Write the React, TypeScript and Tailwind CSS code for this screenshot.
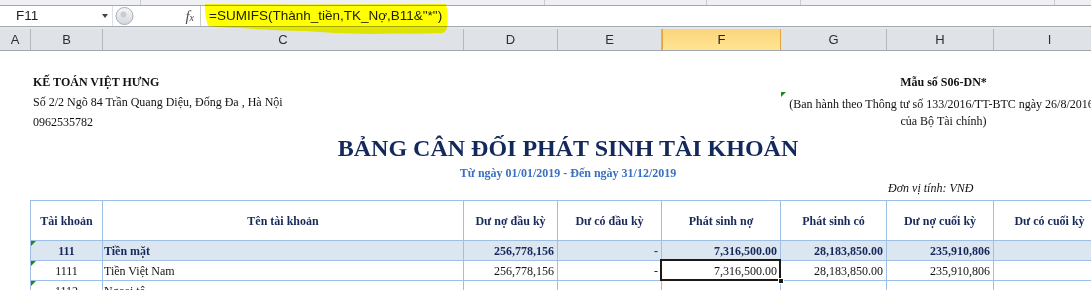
import React from 'react';

const headerCols = [
  { label: 'A', w: 'w-[31px]' },
  { label: 'B', w: 'w-[72px]' },
  { label: 'C', w: 'w-[361px]' },
  { label: 'D', w: 'w-[94px]' },
  { label: 'E', w: 'w-[104px]' },
  { label: 'F', w: 'w-[119px]', active: true },
  { label: 'G', w: 'w-[106px]' },
  { label: 'H', w: 'w-[107px]' },
  { label: 'I', w: 'w-[112px]' },
];

// widths of the table columns B..I
const tw = ['w-[72px]', 'w-[361px]', 'w-[94px]', 'w-[104px]', 'w-[119px]', 'w-[106px]', 'w-[107px]', 'w-[112px]'];

const heads = ['Tài khoản', 'Tên tài khoản', 'Dư nợ đầu kỳ', 'Dư có đầu kỳ', 'Phát sinh nợ', 'Phát sinh có', 'Dư nợ cuối kỳ', 'Dư có cuối kỳ'];

type Row = {
  code: string;
  name: string;
  vals: string[];
  bold?: boolean;
  selected?: boolean;
};

const rows: Row[] = [
  { code: '111', name: 'Tiền mặt', vals: ['256,778,156', '-', '7,316,500.00', '28,183,850.00', '235,910,806', ''], bold: true },
  { code: '1111', name: 'Tiền Việt Nam', vals: ['256,778,156', '-', '7,316,500.00', '28,183,850.00', '235,910,806', ''], selected: true },
  { code: '1112', name: 'Ngoại tệ', vals: ['', '', '', '', '', ''] },
];

function GreenMark() {
  return (
    <span className="absolute left-0 top-0 h-0 w-0 border-r-[5px] border-t-[5px] border-r-transparent border-t-[#1b8a1b]" />
  );
}

function FormulaBar() {
  return (
    <div className="relative">
      <div className="relative h-[5px] bg-[#eef0f3]">
        <span className="absolute left-[140px] top-0 h-[5px] w-px bg-[#c8ccd2]" />
        <span className="absolute left-[544px] top-0 h-[5px] w-px bg-[#c8ccd2]" />
        <span className="absolute left-[706px] top-0 h-[5px] w-px bg-[#c8ccd2]" />
        <span className="absolute left-[800px] top-0 h-[5px] w-px bg-[#c8ccd2]" />
        <span className="absolute left-[1054px] top-0 h-[5px] w-px bg-[#c8ccd2]" />
      </div>
      <div className="h-px bg-[#a3a9b1]" />
      <div className="flex h-[20px] bg-white font-['Liberation_Sans',sans-serif] text-[13.5px] text-[#1e1e1e]">
        <div className="flex w-[113px] flex-none items-center border-r border-[#dde0e4] pl-[16px]">
          <span>F11</span>
          <span className="ml-auto mr-[4px] h-0 w-0 border-l-[3.5px] border-r-[3.5px] border-t-[4px] border-l-transparent border-r-transparent border-t-[#444]" />
        </div>
        <div className="flex w-[87px] flex-none items-center">
          <svg width="19" height="20" viewBox="0 0 19 20" className="ml-[2px]">
            <defs>
              <linearGradient id="grip" x1="0" y1="0" x2="0" y2="1">
                <stop offset="0" stopColor="#f6f7f9" />
                <stop offset="1" stopColor="#d3d7dc" />
              </linearGradient>
            </defs>
            <circle cx="9.5" cy="10" r="8.5" fill="url(#grip)" stroke="#aab0b8" />
            <circle cx="8.5" cy="8.5" r="3" fill="#c9cdd3" />
          </svg>
          <span className="ml-auto mr-[6px] font-['Liberation_Serif',serif] text-[15px] italic text-[#4a4a4a]">
            f<span className="text-[10px]">x</span>
          </span>
        </div>
        <div className="flex flex-1 items-center border-l border-[#c6cbd1] pl-[8px]">
          =SUMIFS(Thành_tiền,TK_Nợ,B11&amp;"*")
        </div>
      </div>
      <div className="h-px bg-[#a3a9b1]" />
      <div className="h-[2px] bg-[#e3e6ea]" />
      <div className="flex h-[22px] border-b border-[#a1a7af] bg-[#dfe3e8] font-['Liberation_Sans',sans-serif] text-[13px] text-[#2e2e2e]">
        {headerCols.map((c) => (
          <div
            key={c.label}
            className={
              c.active
                ? `${c.w} flex flex-none items-center justify-center border-x border-[#e5a440] bg-linear-to-b from-[#fbd47a] to-[#ffe593] text-[#222]`
                : `${c.w} flex flex-none items-center justify-center border-r border-[#b3b8bf]`
            }
          >
            {c.label}
          </div>
        ))}
      </div>
      {/* marker highlight drawn over the formula */}
      <svg
        className="pointer-events-none absolute left-0 top-0 z-20 mix-blend-multiply"
        width="460"
        height="40"
        viewBox="0 0 460 40"
      >
        <path
          d="M205 4 L300 4.5 L446 4 Q449 16 447 28 Q445 34 440 33 Q420 34 395 33.5 Q350 35 305 31 Q265 30 240 28 Q220 27.5 208 26 Q204 15 205 4 Z"
          fill="#ffff00"
        />
      </svg>
    </div>
  );
}

function Sheet() {
  return (
    <div className="font-['Liberation_Serif',serif] text-[12px] text-[#111]">
      <div className="h-[21px]" />
      {/* company and form number */}
      <div className="flex">
        <div className="w-[33px] flex-none" />
        <div className="w-[748px] flex-none">
          <div className="flex h-[20px] items-center font-bold">KẾ TOÁN VIỆT HƯNG</div>
          <div className="flex h-[20px] items-center">Số 2/2 Ngõ 84 Trần Quang Diệu, Đống Đa , Hà Nội</div>
          <div className="flex h-[20px] items-center">0962535782</div>
        </div>
        <div className="relative w-[325px] flex-none">
          <div className="flex h-[20px] items-center justify-center font-bold">Mẫu số S06-DN*</div>
          <div className="relative pt-[4px] leading-[17px]">
            <span className="absolute left-0 top-0 h-0 w-0 border-r-[5px] border-t-[5px] border-r-transparent border-t-[#1b8a1b]" />
            <div className="flex justify-center whitespace-nowrap">(Ban hành theo Thông tư số 133/2016/TT-BTC ngày 26/8/2016)</div>
            <div className="flex justify-center whitespace-nowrap">của Bộ Tài chính)</div>
          </div>
        </div>
      </div>
      {/* title */}
      <div className="ml-[31px] w-[1074px] text-center">
        <div className="flex h-[32px] items-center justify-center text-[24px] font-bold text-[#13295b]">
          BẢNG CÂN ĐỐI PHÁT SINH TÀI KHOẢN
        </div>
        <div className="flex h-[18px] items-center justify-center font-bold text-[#3a70c2]">
          Từ ngày 01/01/2019 - Đến ngày 31/12/2019
        </div>
      </div>
      <div className="flex h-[18px]">
        <div className="w-[888px] flex-none" />
        <div className="leading-[12px] italic">Đơn vị tính: VNĐ</div>
      </div>
      {/* table */}
      <div className="ml-[30px] w-[1076px] border-l border-t border-[#9dbfe6]">
        <div className="flex h-[40px] font-bold text-[#17295a]">
          {heads.map((h, i) => (
            <div key={h} className={`${tw[i]} flex flex-none items-center justify-center border-b border-r border-[#9dbfe6]`}>
              {h}
            </div>
          ))}
        </div>
        {rows.map((r) => (
          <div
            key={r.code}
            className={r.bold ? 'flex h-[20px] bg-[#dce6f1] font-bold text-[#17295a]' : 'flex h-[20px] text-[#141414]'}
          >
            <div className={`${tw[0]} relative flex flex-none items-center justify-center border-b border-r border-[#9dbfe6]`}>
              <GreenMark />
              {r.code}
            </div>
            <div className={`${tw[1]} flex flex-none items-center border-b border-r border-[#9dbfe6] pl-[1px]`}>{r.name}</div>
            {r.vals.map((v, i) => (
              <div
                key={i}
                className={`${tw[i + 2]} relative flex flex-none items-center justify-end border-b border-r border-[#9dbfe6] pr-[3px]`}
              >
                {v}
                {r.selected && i === 2 && (
                  <>
                    <span className="absolute -left-[2px] -top-[2px] bottom-[-1px] right-[-1px] z-10 border-2 border-[#1d1a16]" />
                    <span className="absolute -bottom-[4px] -right-[4px] z-10 h-[6px] w-[6px] border border-white bg-[#1d1a16]" />
                  </>
                )}
              </div>
            ))}
          </div>
        ))}
      </div>
    </div>
  );
}

export default function App() {
  return (
    <div className="relative h-[290px] w-[1091px] overflow-hidden bg-white">
      <FormulaBar />
      <Sheet />
    </div>
  );
}
